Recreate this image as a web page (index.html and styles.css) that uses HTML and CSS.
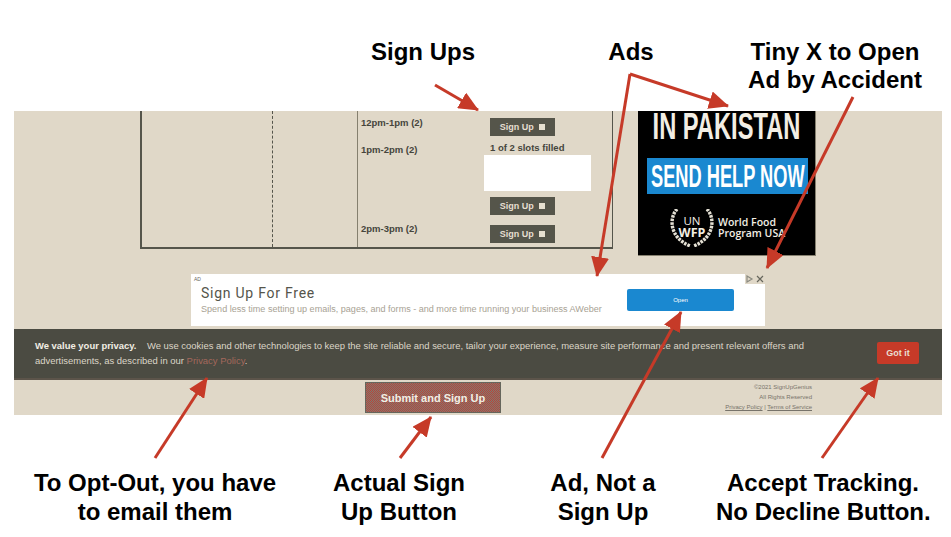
FILE: index.html
```html
<!DOCTYPE html>
<html lang="en">
<head>
  <meta charset="UTF-8" />
  <meta name="viewport" content="width=device-width, initial-scale=1.0" />
  <link rel="stylesheet" href="styles.css">
</head>
<body>
  <div class="canvas">
    <div class="notes notes-top">
      <div class="note">Sign Ups</div>
      <div class="note">Ads</div>
      <div class="note">Tiny X to Open<br>Ad by Accident</div>
    </div>

    <div class="shot">
      <div class="upper">
        <div class="slots-table">
          <div class="col col-first"></div>
          <div class="col col-second"></div>
          <div class="col col-times">
            <div class="time time-a">12pm-1pm (2)</div>
            <div class="time time-b">1pm-2pm (2)</div>
            <div class="time time-c">2pm-3pm (2)</div>
          </div>
          <div class="col col-actions">
            <button class="signup signup-a" type="button">Sign Up <i class="box"></i></button>
            <div class="filled">1 of 2 slots filled</div>
            <div class="name-box"></div>
            <button class="signup signup-b" type="button">Sign Up <i class="box"></i></button>
            <button class="signup signup-c" type="button">Sign Up <i class="box"></i></button>
          </div>
        </div>

        <div class="wfp-ad">
          <div class="wfp-head"><span>IN PAKISTAN</span></div>
          <div class="wfp-help"><span>SEND HELP NOW</span></div>
          <div class="wfp-logo">
            <div class="wfp-mark">
              <svg width="46" height="38" viewBox="0 0 46 38">
                <g fill="none" stroke="#e4e0d4" stroke-width="3.4" stroke-dasharray="2.6 1">
                  <path d="M8 0C0 9 0 28 21 37" />
                  <path d="M38 0C46 9 46 28 25 37" />
                </g>
              </svg>
              <span class="un">UN</span>
              <span class="wfp">WFP</span>
            </div>
            <div class="wfp-name">World Food<br>Program USA</div>
          </div>
        </div>
      </div>

      <div class="banner">
        <div class="banner-tag">AD</div>
        <div class="banner-copy">
          <div class="banner-title">Sign Up For Free</div>
          <div class="banner-sub">Spend less time setting up emails, pages, and forms - and more time running your business AWeber</div>
        </div>
        <button class="banner-btn" type="button">Open</button>
        <div class="banner-icons">
          <svg width="8" height="8" viewBox="0 0 8 8"><path d="M1 1l5 3-5 3z" fill="none" stroke="#8a8a80" stroke-width="1.2" /></svg>
          <svg class="close" width="8" height="8" viewBox="0 0 8 8"><path d="M1 1l6 6M7 1l-6 6" stroke="#66665c" stroke-width="1.2" /></svg>
        </div>
      </div>

      <div class="cookie">
        <p class="cookie-text"><b>We value your privacy.</b>&nbsp;&nbsp;&nbsp; We use cookies and other technologies to keep the site reliable and secure, tailor your experience, measure site performance and present relevant offers and advertisements, as described in our <a>Privacy Policy</a>.</p>
        <button class="got-it" type="button">Got it</button>
      </div>

      <div class="foot">
        <button class="submit" type="button">Submit and Sign Up</button>
        <div class="legal">
          <div>©2021 SignUpGenius</div>
          <div>All Rights Reserved</div>
          <div><u>Privacy Policy</u> | <u>Terms of Service</u></div>
        </div>
      </div>
    </div>

    <div class="notes notes-bottom">
      <div class="note">To Opt-Out, you have<br>to email them</div>
      <div class="note">Actual Sign<br>Up Button</div>
      <div class="note">Ad, Not a<br>Sign Up</div>
      <div class="note">Accept Tracking.<br>No Decline Button.</div>
    </div>

    <!-- callout arrows sit on top of everything -->
    <svg class="arrows" width="951" height="537" viewBox="0 0 951 537">
      <defs>
        <marker id="head" markerUnits="userSpaceOnUse" markerWidth="20" markerHeight="18" refX="19" refY="9" orient="auto">
          <path d="M0 0L20 9L0 18z" fill="#c63a28" />
        </marker>
      </defs>
      <g stroke="#c63a28" stroke-width="3" fill="none" marker-end="url(#head)">
        <path d="M435 85L478 110" />
        <path d="M630 74L728 106" />
        <path d="M630 74L597 276" />
        <path d="M853 97L767 268" />
        <path d="M155 458L207 378" />
        <path d="M400 458L431 417" />
        <path d="M602 458L681 312" />
        <path d="M822 458L878 378" />
      </g>
    </svg>
  </div>
</body>
</html>
```

FILE: styles.css
```css
html, body {
  margin: 0;
  background: #fff;
}

.canvas {
  position: relative;
  width: 951px;
  height: 537px;
  overflow: hidden;
  font-family: "Liberation Sans", Arial, sans-serif;
}

.notes {
  display: grid;
  font-size: 24px;
  font-weight: bold;
  line-height: 29px;
  text-align: center;
  color: #000;
}

.note {
  white-space: nowrap;
}

.notes-top {
  height: 111px;
  box-sizing: border-box;
  padding: 38px 0 0 323px;
  grid-template-columns: 200px 216px 192px;
  line-height: 28px;
}

.notes-bottom {
  padding: 53px 0 0 6px;
  column-gap: 4px;
  grid-template-columns: 298px 182px 218px 214px;
}

.shot {
  margin-left: 14px;
  width: 928px;
  height: 304px;
  background: #e0d8c8;
}

.upper {
  display: flex;
  align-items: flex-start;
  height: 145px;
  padding-left: 126px;
}

/* sign up table */
.slots-table {
  display: flex;
  width: 473px;
  height: 138px;
  box-sizing: border-box;
  border: 1px solid #55554b;
  border-width: 0 1px 2px 2px;
  font-size: 9.5px;
  font-weight: bold;
  color: #45453c;
}

.col-first {
  width: 130px;
  border-right: 1px dashed #55554b;
}

.col-second {
  width: 84px;
  border-right: 1px solid #85806f;
}

.col-times {
  width: 129px;
  padding: 6px 0 0 3px;
  box-sizing: border-box;
}

.time {
  line-height: 11px;
}

.time-b {
  margin-top: 16px;
}

.time-c {
  margin-top: 68px;
}

.col-actions {
  padding: 7px 0 0 3px;
}

.signup {
  display: block;
  width: 65px;
  height: 18px;
  padding: 0;
  border: 0;
  background: #55554a;
  color: #e6dfd0;
  font: bold 9px "Liberation Sans", Arial, sans-serif;
}

.box {
  display: inline-block;
  width: 6px;
  height: 6px;
  margin-left: 3px;
  background: #e6dfd0;
}

.filled {
  margin-top: 6px;
  line-height: 12px;
  font-size: 9.5px;
}

.name-box {
  width: 107px;
  height: 36px;
  margin: 1px 0 6px -6px;
  background: #fff;
}

.signup-c {
  margin-top: 10px;
}

/* world food programme ad */
.wfp-ad {
  width: 178px;
  height: 145px;
  margin-left: 25px;
  box-sizing: border-box;
  background: #000;
  color: #f2eee4;
  border-right: 1px solid #85806f;
  border-bottom: 1px solid #85806f;
}

.wfp-head, .wfp-help {
  display: flex;
  justify-content: center;
  font-weight: bold;
  white-space: nowrap;
}

.wfp-head span, .wfp-help span {
  display: block;
  flex: none;
}

.wfp-head {
  height: 47px;
  font-size: 37px;
  line-height: 31px;
}

.wfp-head span {
  transform: scaleX(0.64);
}

.wfp-help {
  width: 161px;
  height: 36px;
  margin-left: 9px;
  background: #1a88d0;
  color: #fff;
  font-size: 32px;
  line-height: 36px;
}

.wfp-help span {
  transform: scaleX(0.57);
}

.wfp-logo {
  display: flex;
  align-items: center;
  gap: 3px;
  margin: 15px 0 0 31px;
}

.wfp-mark {
  position: relative;
  width: 46px;
  height: 38px;
}

.un, .wfp {
  position: absolute;
  left: 0;
  width: 46px;
  text-align: center;
  font-family: "Open Sans", sans-serif;
}

.un {
  top: 6px;
  font-size: 11.5px;
  line-height: 12px;
}

.wfp {
  top: 17px;
  font-size: 12.5px;
  font-weight: bold;
  line-height: 13px;
}

.wfp-name {
  font: 600 10.5px/11px "Open Sans", sans-serif;
  white-space: nowrap;
}

/* text ad banner */
.banner {
  position: relative;
  display: flex;
  align-items: center;
  justify-content: space-between;
  width: 574px;
  height: 52px;
  margin: 18px 0 3px 177px;
  box-sizing: border-box;
  padding: 0 31px 0 10px;
  background: #fff;
}

.banner-tag {
  position: absolute;
  top: 2px;
  left: 3px;
  font-size: 5px;
  color: #66665c;
}

.banner-title {
  font: 14px/17px Roboto, "Liberation Sans", sans-serif;
  letter-spacing: 0.75px;
  color: #55554b;
}

.banner-sub {
  margin-top: 2px;
  font-size: 9.05px;
  line-height: 11px;
  color: #a8a294;
  white-space: nowrap;
}

.banner-btn {
  width: 107px;
  height: 22px;
  padding: 0;
  border: 0;
  border-radius: 2px;
  background: #1a88d0;
  color: #fff;
  font: 6px "Liberation Sans", Arial, sans-serif;
}

.banner-icons {
  position: absolute;
  top: 0;
  right: 0;
  display: flex;
  gap: 2px;
  padding: 1px;
  background: #e0d8c8;
}

/* cookie bar */
.cookie {
  display: flex;
  justify-content: space-between;
  align-items: flex-start;
  height: 51px;
  box-sizing: border-box;
  padding: 10px 23px 0 21px;
  background: #4b4b42;
  border-bottom: 2px solid #5c544a;
  color: #dcd6c8;
}

.cookie-text {
  width: 780px;
  margin: 0;
  font-size: 9.45px;
  line-height: 14.5px;
}

.cookie-text b {
  color: #f2eee4;
}

.cookie-text a {
  color: #a4685c;
}

.got-it {
  width: 42px;
  height: 22px;
  margin-top: 3px;
  padding: 0;
  border: 0;
  border-radius: 2px;
  background: #c63a28;
  color: #eadfd2;
  font: bold 9px "Liberation Sans", Arial, sans-serif;
}

/* page footer */
.foot {
  display: flex;
  align-items: flex-start;
  padding-left: 351px;
}

.submit {
  width: 136px;
  height: 31px;
  margin-top: 2px;
  padding: 0;
  border: 1px solid #66665c;
  background: repeating-conic-gradient(#b8443a 0 25%, #7f7a70 0 50%) 0 0 / 2px 2px;
  color: #f2eee4;
  font: bold 11px "Liberation Sans", Arial, sans-serif;
}

.legal {
  width: 311px;
  margin-top: 2px;
  font-size: 6px;
  line-height: 10px;
  text-align: right;
  color: #77736a;
}

.arrows {
  position: absolute;
  top: 0;
  left: 0;
}
```
